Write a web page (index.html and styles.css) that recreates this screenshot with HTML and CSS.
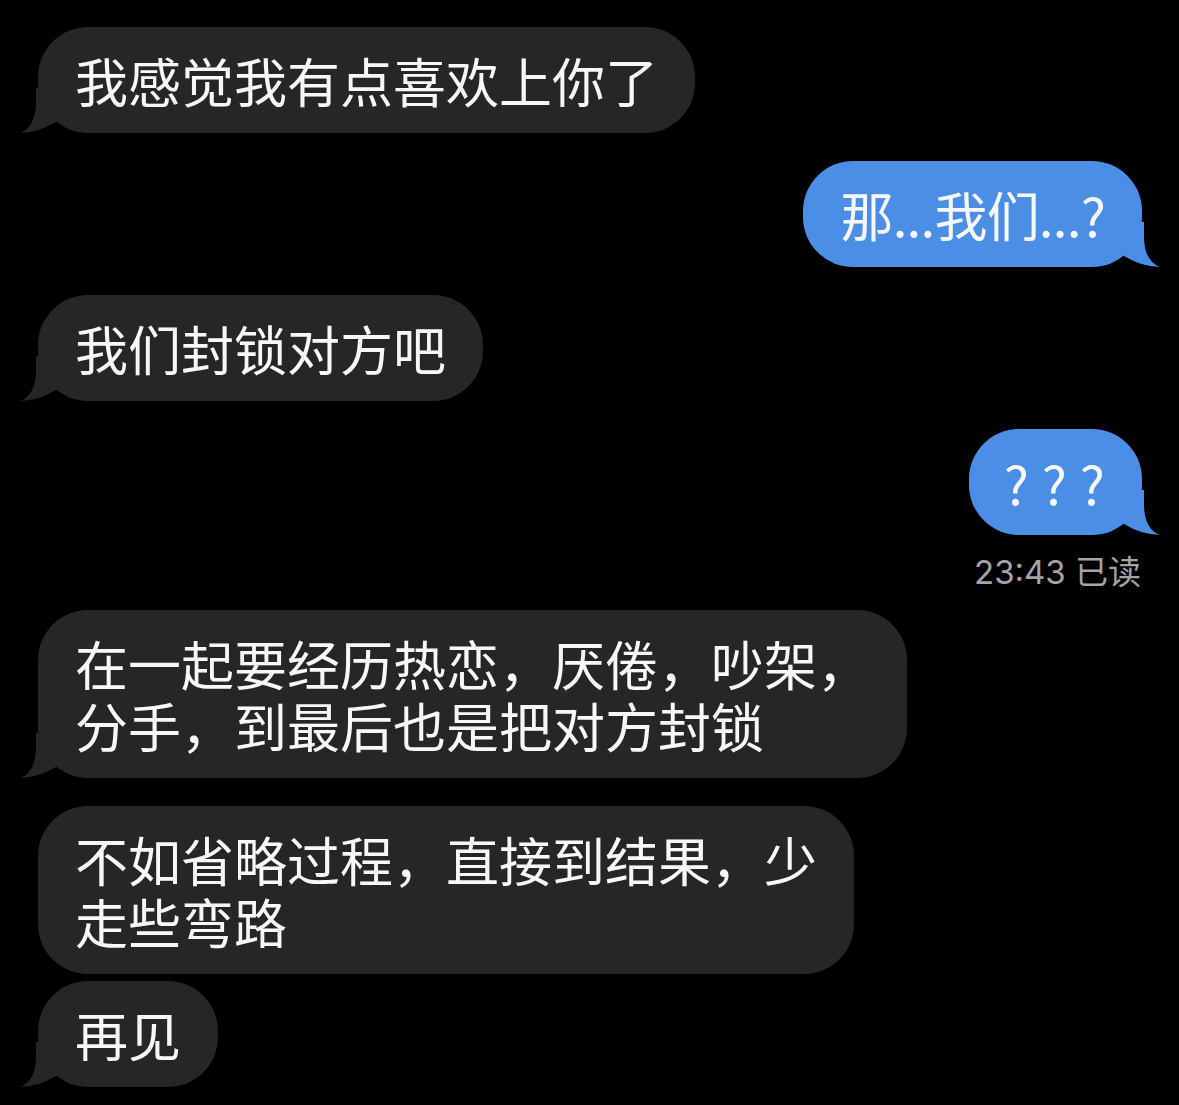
FILE: index.html
```html
<!DOCTYPE html>
<html>
<head>
  <meta charset="utf-8">
  <title>聊天记录</title>
  <link rel="stylesheet" href="styles.css">
</head>
<body>

  <div class="chat">
    <div class="msg them tail">我感觉我有点喜欢上你了</div>
    <div class="msg me tail tight">那...我们...?</div>
    <div class="msg them tail">我们封锁对方吧</div>
    <div class="msg me tail ask">???</div>
    <div class="read">23:43 已读</div>
    <div class="msg them tail">在一起要经历热恋，厌倦，吵架，<br>分手，到最后也是把对方封锁</div>
    <div class="msg them">不如省略过程，直接到结果，少<br>走些弯路</div>
    <div class="msg them tail close">再见</div>
  </div>

</body>
</html>
```

FILE: styles.css
```css
html, body {
  margin: 0;
  background: #000;
}

body {
  font-family: "Noto Sans CJK SC", "Noto Sans", sans-serif;
}

.chat {
  display: flex;
  flex-direction: column;
  padding: 27px 37px 0 38px;
}

.msg {
  position: relative;
  max-width: 900px;
  padding: 22px 37px;
  border-radius: 50px;
  font-size: 53px;
  line-height: 62px;
  color: #f7f7f7;
  white-space: nowrap;
}

.msg + .msg {
  margin-top: 28px;
}

.msg.close {
  margin-top: 7px;
}

.them {
  align-self: flex-start;
  background: #262628;
}

.me {
  align-self: flex-end;
  background: #4b8ee6;
}

/* bubble tail, drawn as a clipped block at the bottom corner */
.tail::before {
  content: "";
  position: absolute;
  bottom: 0;
  width: 42px;
  height: 45px;
  background: inherit;
  clip-path: path("M18 0 L42 0 L42 32 L36 35 Q22 44 2 45 C10 42 18 34 18 14 Z");
}

.them.tail::before {
  left: -20px;
}

.me.tail::before {
  right: -20px;
  transform: scaleX(-1);
}

.tight {
  letter-spacing: -0.8px;
}

.ask {
  letter-spacing: 13px;
  padding-left: 35px;
  padding-right: 24px;
}

.read {
  align-self: flex-end;
  margin: 14px 1px 15px 0;
  font-family: "Inter", "Noto Sans CJK SC", sans-serif;
  font-size: 33px;
  line-height: 46px;
  color: #a3a3a8;
}

.read + .msg {
  margin-top: 0;
}
```
